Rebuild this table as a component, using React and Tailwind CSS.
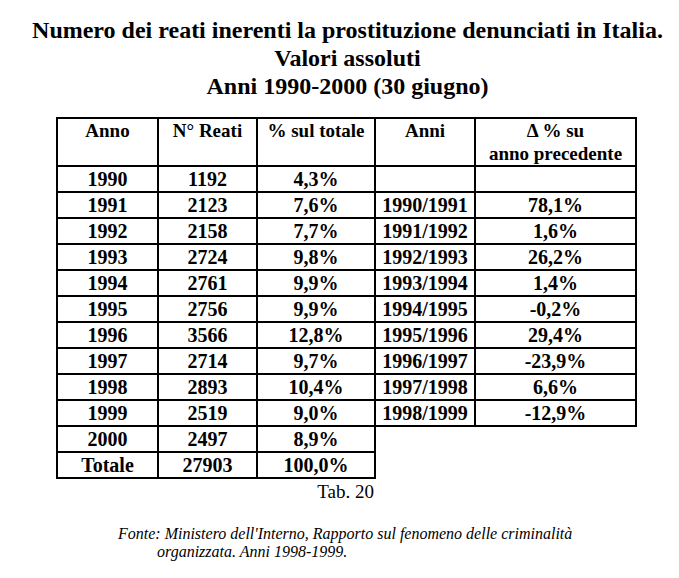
const rows = [
  ['1990', '1192', '4,3%', '', ''],
  ['1991', '2123', '7,6%', '1990/1991', '78,1%'],
  ['1992', '2158', '7,7%', '1991/1992', '1,6%'],
  ['1993', '2724', '9,8%', '1992/1993', '26,2%'],
  ['1994', '2761', '9,9%', '1993/1994', '1,4%'],
  ['1995', '2756', '9,9%', '1994/1995', '-0,2%'],
  ['1996', '3566', '12,8%', '1995/1996', '29,4%'],
  ['1997', '2714', '9,7%', '1996/1997', '-23,9%'],
  ['1998', '2893', '10,4%', '1997/1998', '6,6%'],
  ['1999', '2519', '9,0%', '1998/1999', '-12,9%'],
  ['2000', '2497', '8,9%'],
  ['Totale', '27903', '100,0%'],
];

const serif = { fontFamily: '"Liberation Serif", "Times New Roman", serif' };

export default function App() {
  return (
    <div className="w-[679px] h-[578px] bg-white text-black overflow-hidden" style={serif}>
      {/* titolo */}
      <div className="pt-[16px] pl-4 text-center font-bold text-[24px] leading-[28px]">
        <div>Numero dei reati inerenti la prostituzione denunciati in Italia.</div>
        <div>Valori assoluti</div>
        <div>Anni 1990-2000 (30 giugno)</div>
      </div>

      {/* tabella */}
      <div className="mt-[17px] ml-[56px]">
        <table className="border-collapse table-fixed font-bold">
          <colgroup>
            <col className="w-[101px]" />
            <col className="w-[99px]" />
            <col className="w-[118px]" />
            <col className="w-[100px]" />
            <col className="w-[161px]" />
          </colgroup>
          <thead>
            <tr className="h-[48px] text-[19px]">
              <th className="border-2 border-black align-top p-0 font-bold leading-[24px]">Anno</th>
              <th className="border-2 border-black align-top p-0 font-bold leading-[24px]">N° Reati</th>
              <th className="border-2 border-black align-top p-0 font-bold leading-[24px]">% sul totale</th>
              <th className="border-2 border-black align-top p-0 font-bold leading-[24px]">Anni</th>
              <th className="border-2 border-black align-top p-0 font-bold">
                <div className="leading-[24px]">Δ % su</div>
                <div className="leading-[22px]">anno precedente</div>
              </th>
            </tr>
          </thead>
          <tbody className="text-[20px] leading-[22px]">
            {rows.map((r) => (
              <tr key={r[0]} className="h-[26px]">
                {r.map((c, i) => (
                  <td key={i} className="border-2 border-black text-center p-0">
                    {c}
                  </td>
                ))}
              </tr>
            ))}
          </tbody>
        </table>
        <div className="w-[318px] text-right text-[19px] leading-[22px] mt-[2px]">Tab. 20</div>
      </div>

      {/* fonte */}
      <div className="mt-[22px] pl-[118px] italic text-[16px] leading-[18px]">
        <div>Fonte: Ministero dell'Interno, Rapporto sul fenomeno delle criminalità</div>
        <div className="pl-[39px]">organizzata. Anni 1998-1999.</div>
      </div>
    </div>
  );
}
